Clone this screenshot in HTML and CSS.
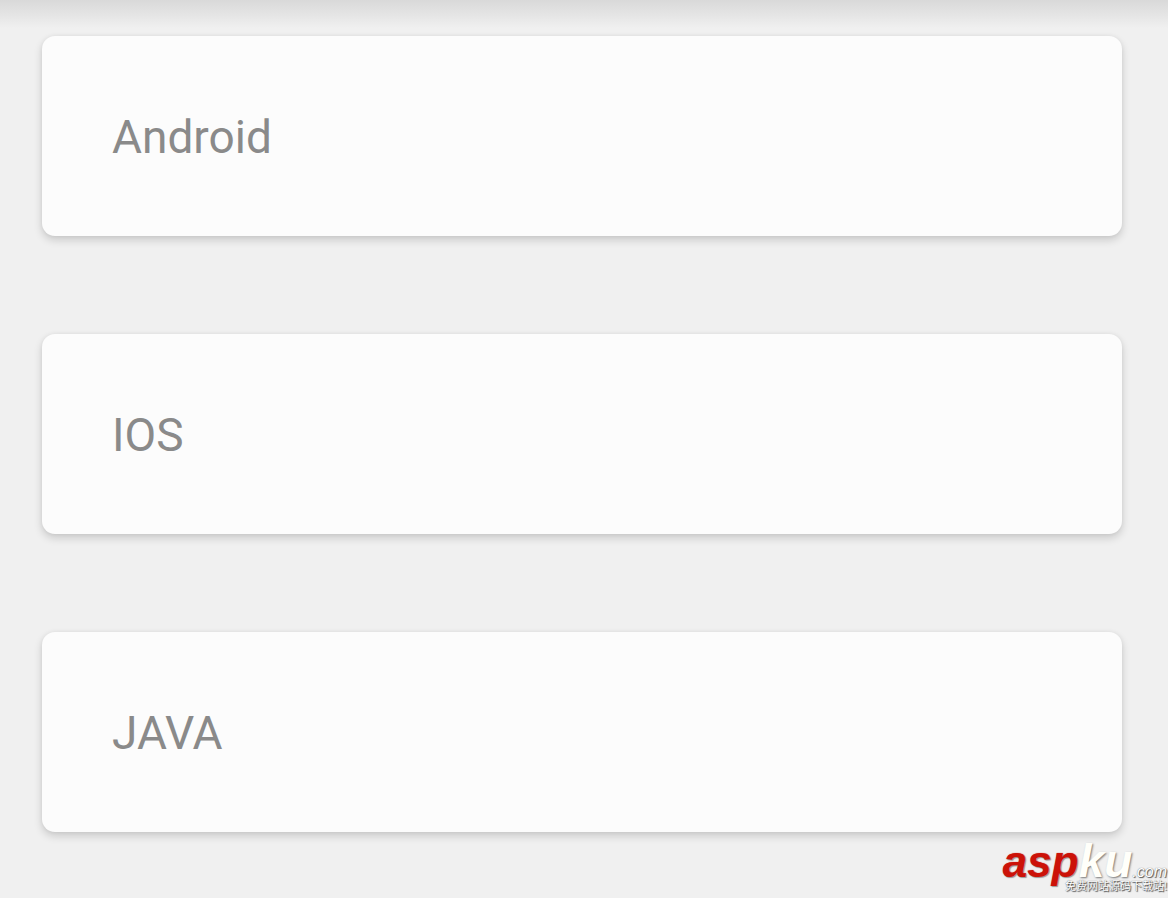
FILE: index.html
```html
<!DOCTYPE html>
<html lang="zh-CN">
<head>
  <meta charset="UTF-8">
  <meta name="viewport" content="width=device-width, initial-scale=1.0">
  <title>CardView</title>
  <link rel="stylesheet" href="styles.css">
</head>
<body>
  <main class="screen">
    <div class="card">Android</div>
    <div class="card">IOS</div>
    <div class="card">JAVA</div>
  </main>
  <!-- Site watermark -->
  <div class="watermark">
    <div class="logo"><span class="logo-asp">asp</span><span class="logo-ku">ku</span><span class="logo-com">.com</span></div>
    <div class="slogan">免费网站源码下载站!</div>
  </div>
</body>
</html>
```
FILE: styles.css
```css
body {
  margin: 0;
  background: #fff;
  font-family: Roboto, sans-serif;
}
.screen {
  display: flex;
  flex-direction: column;
  gap: 98px;
  box-sizing: border-box;
  min-height: 100vh;
  margin-right: 4px;
  padding: 36px 46px 64px 42px;
  /* toolbar shadow over the grey page */
  background: linear-gradient(#d9d9d9, #e4e4e4 14px, #f0f0f0 28px);
}
.card {
  padding: 73px 70px 71px;
  border-radius: 13px;
  background: #fcfcfc;
  color: #8a8a8a;
  font-size: 46px;
  line-height: 56px;
  box-shadow: 0 4px 8px rgba(0, 0, 0, 0.16), 0 0 4px rgba(0, 0, 0, 0.05);
}
.watermark {
  position: absolute;
  right: 5px;
  bottom: 5px;
  font-family: "Liberation Sans", sans-serif;
}
.logo {
  font-size: 44px;
  font-style: italic;
  line-height: 50px;
  text-align: right;
  white-space: nowrap;
}
.logo-asp {
  color: #cc1208;
  font-weight: bold;
  text-shadow: 1px 1px 1px #999, 0 0 1px #cc1208;
}
.logo-ku {
  color: #fffffa;
  font-weight: bold;
  font-size: 46px;
  text-shadow: 1px 1px 2px #777;
}
.logo-com {
  color: #fff;
  font-size: 16px;
  text-shadow: 1px 1px 1px #555, 0 0 1px #666;
}
/* the tagline tucks in under "ku", beside the tail of the p */
.slogan {
  margin-top: -18px;
  color: #fff;
  font-family: "Liberation Sans", "Noto Sans CJK SC", sans-serif;
  font-size: 11px;
  line-height: 14px;
  text-align: right;
  text-shadow: 1px 1px 1px #444, 0 0 1px #555;
}
```
